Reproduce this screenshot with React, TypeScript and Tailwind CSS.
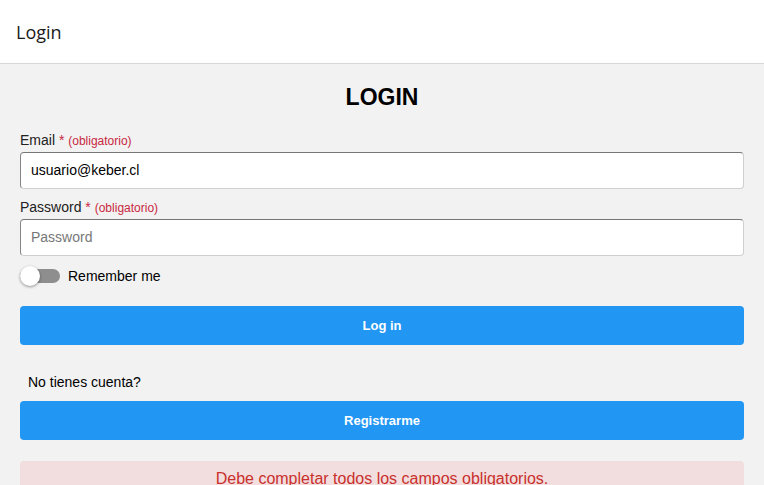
import React from "react";

export default function App() {
  return (
    <div className="min-h-[485px] bg-[#f2f2f2] font-['Liberation_Sans',Arial,sans-serif]">
      <header className="h-[64px] bg-white border-b border-[#d8d8d8] flex items-center px-4">
        <span className="text-[18px] text-[#1a1a1a] font-medium font-['Open_Sans','Noto_Sans',sans-serif] leading-none pt-[1px]">Login</span>
      </header>
      <main className="px-5">
        <h1 className="text-center text-[23px] font-bold text-black pt-[19px] leading-[28px]">LOGIN</h1>
        <div className="mt-[21px]">
          <label className="block text-[14px] text-[#222] leading-[16px]">
            Email <span className="text-[#c8283f]">*</span>{" "}
            <span className="text-[12px] text-[#c8283f]">(obligatorio)</span>
          </label>
          <div className="mt-[3px] h-[37px] bg-white rounded-[4px] border border-t-[#767676] border-l-[#858585] border-r-[#cfcfcf] border-b-[#cfcfcf] flex items-center px-[10px] text-[14px] text-black">
            usuario@keber.cl
          </div>
        </div>
        <div className="mt-[10px]">
          <label className="block text-[14px] text-[#222] leading-[16px]">
            Password <span className="text-[#c8283f]">*</span>{" "}
            <span className="text-[12px] text-[#c8283f]">(obligatorio)</span>
          </label>
          <div className="mt-[3px] h-[37px] bg-white rounded-[4px] border border-t-[#767676] border-l-[#858585] border-r-[#cfcfcf] border-b-[#cfcfcf] flex items-center px-[10px] text-[14px] text-[#777]">
            Password
          </div>
        </div>
        <div className="mt-[9px] flex items-center h-[22px]">
          <div className="relative w-[40px] h-[14px] rounded-full bg-[#8e8e8e]">
            <div className="absolute left-0 top-[-3px] w-[20px] h-[20px] rounded-full bg-white shadow-[0_1px_3px_rgba(0,0,0,0.4)]"></div>
          </div>
          <span className="ml-[8px] text-[14px] text-black">Remember me</span>
        </div>
        <button className="mt-[19px] w-full h-[39px] rounded-[4px] bg-[#2196f3] text-white text-[13px] font-bold">Log in</button>
        <p className="mt-[29px] px-2 text-[14px] text-black leading-[16px]">No tienes cuenta?</p>
        <button className="mt-[11px] w-full h-[39px] rounded-[4px] bg-[#2196f3] text-white text-[13px] font-bold">Registrarme</button>
        <div className="mt-[21px] rounded-[4px] bg-[#f2dede] h-[40px] pt-[8px] text-center text-[16px] text-[#c9302c] leading-[20px]">
          Debe completar todos los campos obligatorios.
        </div>
      </main>
    </div>
  );
}
